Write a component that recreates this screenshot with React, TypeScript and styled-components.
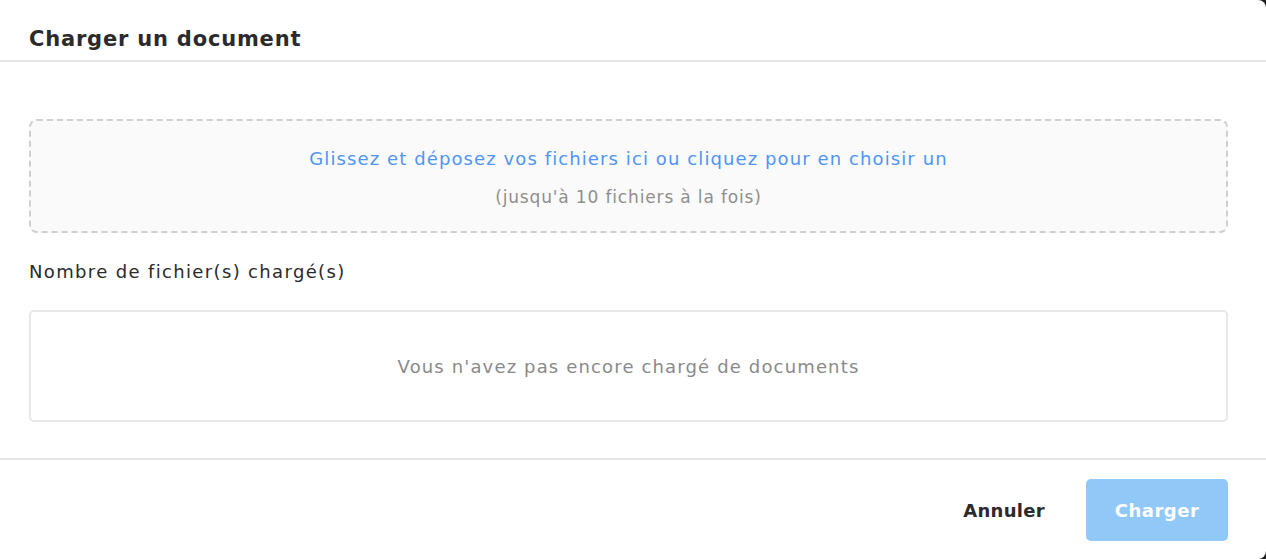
import React from "react"
import styled, { createGlobalStyle } from "styled-components"

const GlobalStyle = createGlobalStyle`
  html, body {
    margin: 0;
    padding: 0;
    background: #1f1f1f;
  }
  * {
    box-sizing: border-box;
  }
`

export default function App() {
  return (
    <>
      <GlobalStyle />
      <Modal>
        <Header>
          <Title>Charger un document</Title>
        </Header>
        <Body>
          <DropZone>
            <DropMain>Glissez et déposez vos fichiers ici ou cliquez pour en choisir un</DropMain>
            <DropHint>(jusqu'à 10 fichiers à la fois)</DropHint>
          </DropZone>
          <Label>Nombre de fichier(s) chargé(s)</Label>
          <FileList>
            <Empty>Vous n'avez pas encore chargé de documents</Empty>
          </FileList>
        </Body>
        <Footer>
          <CancelButton>Annuler</CancelButton>
          <SubmitButton disabled>Charger</SubmitButton>
        </Footer>
      </Modal>
    </>
  )
}

const Modal = styled.div`
  width: 1266px;
  height: 559px;
  display: flex;
  flex-direction: column;
  background: #fff;
  border-radius: 0 8px 8px 0;
  overflow: hidden;
  font-family: "DejaVu Sans", "Noto Sans", sans-serif;
  color: #2b2b2b;
`

const Header = styled.div`
  height: 62px;
  padding: 0 29px;
  display: flex;
  align-items: center;
  padding-top: 18px;
  border-bottom: 2px solid #e6e6e6;
`

const Title = styled.h1`
  margin: 0;
  font-size: 21px;
  font-weight: 700;
  letter-spacing: 0.8px;
  color: #2b2b2b;
`

const Body = styled.div`
  flex: 1;
  padding: 57px 38px 0 29px;
  display: flex;
  flex-direction: column;
  border-bottom: 2px solid #e6e6e6;
`

const DropZone = styled.div`
  height: 114px;
  border: 2px dashed #cfcfcf;
  border-radius: 8px;
  background: #fafafa;
  display: flex;
  flex-direction: column;
  align-items: center;
  justify-content: center;
  gap: 16px;
  padding-top: 3px;
  cursor: pointer;
`

const DropMain = styled.div`
  font-size: 18px;
  letter-spacing: 1.1px;
  color: #4f95f7;
  line-height: 22px;
`

const DropHint = styled.div`
  font-size: 17px;
  letter-spacing: 0.85px;
  color: #8f8f8f;
  line-height: 22px;
`

const Label = styled.div`
  margin-top: 28px;
  height: 22px;
  line-height: 22px;
  font-size: 18px;
  letter-spacing: 1.35px;
  color: #2a2a2a;
`

const FileList = styled.div`
  margin-top: 27px;
  height: 112px;
  border: 2px solid #e8e8e8;
  border-radius: 5px;
  display: flex;
  align-items: center;
  justify-content: center;
`

const Empty = styled.div`
  font-size: 18px;
  letter-spacing: 1.15px;
  color: #8a8a8a;
`

const Footer = styled.div`
  height: 99px;
  padding: 19px 38px 18px 0;
  display: flex;
  align-items: stretch;
  justify-content: flex-end;
  gap: 41px;
`

const CancelButton = styled.button`
  border: none;
  background: none;
  padding: 0;
  font-family: inherit;
  font-size: 18px;
  font-weight: 600;
  letter-spacing: 0.3px;
  color: #2b2b2b;
  cursor: pointer;
`

const SubmitButton = styled.button`
  width: 142px;
  border: none;
  border-radius: 5px;
  background: #90c8f8;
  color: #fff;
  font-family: inherit;
  font-size: 18px;
  font-weight: 700;
  letter-spacing: 0.5px;
  cursor: default;
`
